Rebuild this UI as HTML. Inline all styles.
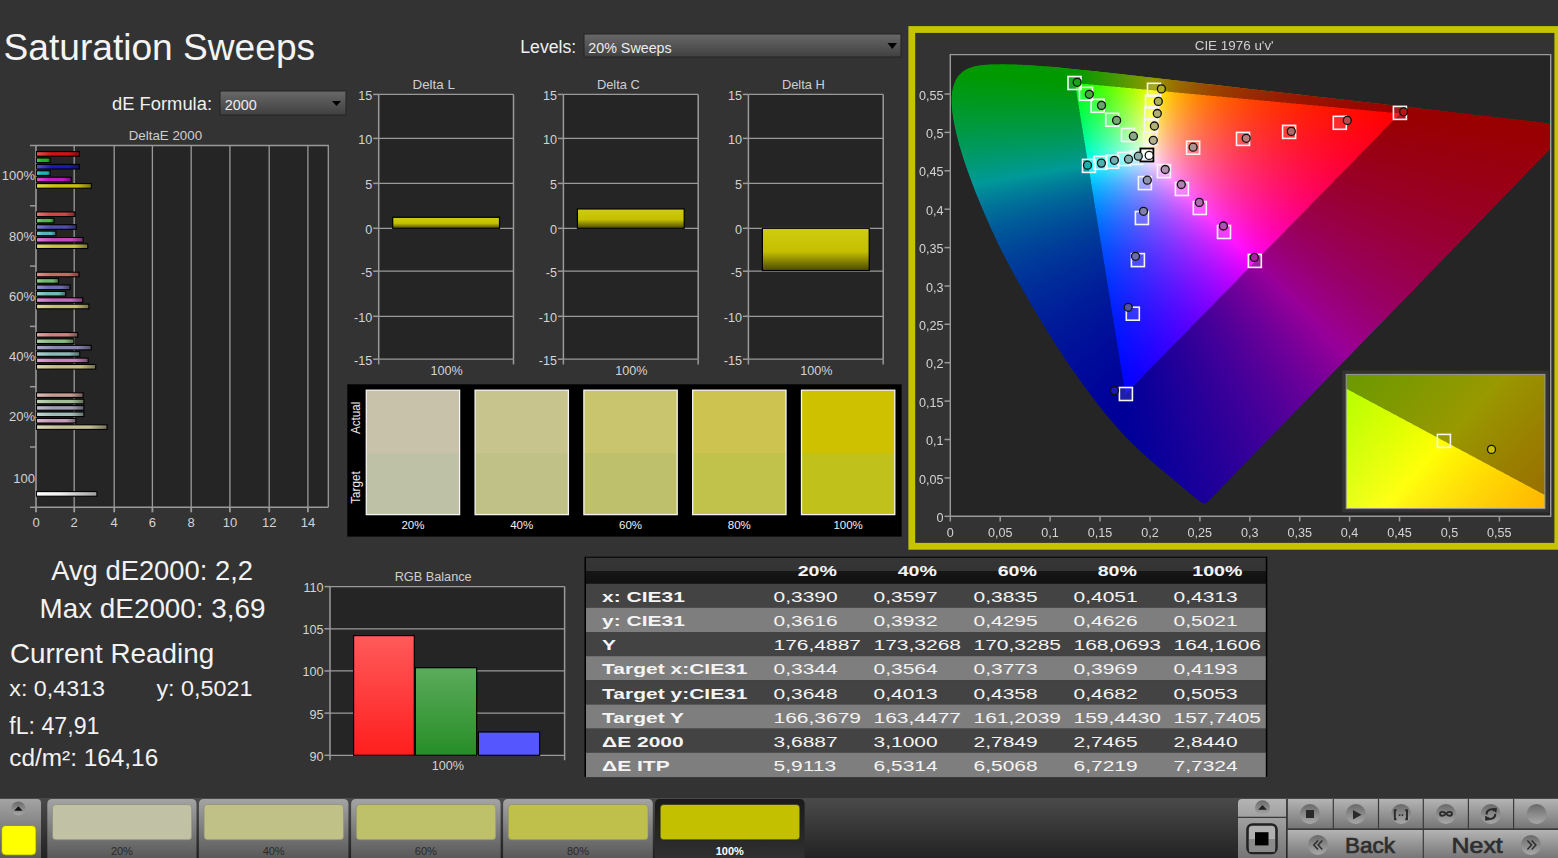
<!DOCTYPE html>
<html><head><meta charset="utf-8"><title>Saturation Sweeps</title>
<style>
html,body{margin:0;padding:0;background:#333333;width:1558px;height:858px;overflow:hidden}
svg{position:absolute;left:0;top:0;font-family:"Liberation Sans", sans-serif}
canvas{position:absolute}
</style></head><body>
<svg id="base" width="1558" height="858" viewBox="0 0 1558 858">
<defs>
<linearGradient id="dd" x1="0" y1="0" x2="0" y2="1"><stop offset="0" stop-color="#686868"/><stop offset="1" stop-color="#404040"/></linearGradient>
<linearGradient id="ybar" x1="0" y1="0" x2="0" y2="1"><stop offset="0" stop-color="#cfcb10"/><stop offset="0.55" stop-color="#c4c000"/><stop offset="1" stop-color="#4a4800"/></linearGradient>
<linearGradient id="rbar" x1="0" y1="0" x2="0" y2="1"><stop offset="0" stop-color="#ff5a5a"/><stop offset="1" stop-color="#ff1e1e"/></linearGradient>
<linearGradient id="gbar" x1="0" y1="0" x2="0" y2="1"><stop offset="0" stop-color="#5cab5c"/><stop offset="1" stop-color="#268e26"/></linearGradient>
<linearGradient id="hdr" x1="0" y1="0" x2="0" y2="1"><stop offset="0" stop-color="#363636"/><stop offset="0.5" stop-color="#333333"/><stop offset="0.5" stop-color="#161616"/><stop offset="1" stop-color="#111111"/></linearGradient>
<linearGradient id="tab" x1="0" y1="0" x2="0" y2="1"><stop offset="0" stop-color="#a4a4a4"/><stop offset="1" stop-color="#595959"/></linearGradient>
<linearGradient id="darkbar" x1="0" y1="0" x2="0" y2="1"><stop offset="0" stop-color="#4a4a4a"/><stop offset="1" stop-color="#232323"/></linearGradient>
<linearGradient id="btn" x1="0" y1="0" x2="0" y2="1"><stop offset="0" stop-color="#b4b4b4"/><stop offset="1" stop-color="#767676"/></linearGradient>
<linearGradient id="circ" x1="0" y1="0" x2="0" y2="1"><stop offset="0" stop-color="#6a6a6a"/><stop offset="1" stop-color="#a8a8a8"/></linearGradient>
<linearGradient id="b00" x1="0" y1="0" x2="1" y2="0"><stop offset="0" stop-color="#e34f4f"/><stop offset="0.35" stop-color="#cd1414"/><stop offset="0.75" stop-color="#cd1414"/><stop offset="1" stop-color="#7b0c0c"/></linearGradient>
<linearGradient id="b01" x1="0" y1="0" x2="1" y2="0"><stop offset="0" stop-color="#57cf57"/><stop offset="0.35" stop-color="#1eb41e"/><stop offset="0.75" stop-color="#1eb41e"/><stop offset="1" stop-color="#126c12"/></linearGradient>
<linearGradient id="b02" x1="0" y1="0" x2="1" y2="0"><stop offset="0" stop-color="#5353cb"/><stop offset="0.35" stop-color="#1919af"/><stop offset="0.75" stop-color="#1919af"/><stop offset="1" stop-color="#0f0f69"/></linearGradient>
<linearGradient id="b03" x1="0" y1="0" x2="1" y2="0"><stop offset="0" stop-color="#57cfd3"/><stop offset="0.35" stop-color="#1eb4b9"/><stop offset="0.75" stop-color="#1eb4b9"/><stop offset="1" stop-color="#126c6f"/></linearGradient>
<linearGradient id="b04" x1="0" y1="0" x2="1" y2="0"><stop offset="0" stop-color="#db53db"/><stop offset="0.35" stop-color="#c319c3"/><stop offset="0.75" stop-color="#c319c3"/><stop offset="1" stop-color="#750f75"/></linearGradient>
<linearGradient id="b05" x1="0" y1="0" x2="1" y2="0"><stop offset="0" stop-color="#dfd94f"/><stop offset="0.35" stop-color="#c8c014"/><stop offset="0.75" stop-color="#c8c014"/><stop offset="1" stop-color="#78730c"/></linearGradient>
<linearGradient id="b10" x1="0" y1="0" x2="1" y2="0"><stop offset="0" stop-color="#e17a78"/><stop offset="0.35" stop-color="#ca4a47"/><stop offset="0.75" stop-color="#ca4a47"/><stop offset="1" stop-color="#792c2a"/></linearGradient>
<linearGradient id="b11" x1="0" y1="0" x2="1" y2="0"><stop offset="0" stop-color="#82d27e"/><stop offset="0.35" stop-color="#53b74e"/><stop offset="0.75" stop-color="#53b74e"/><stop offset="1" stop-color="#316d2e"/></linearGradient>
<linearGradient id="b12" x1="0" y1="0" x2="1" y2="0"><stop offset="0" stop-color="#7e7dcd"/><stop offset="0.35" stop-color="#4f4db1"/><stop offset="0.75" stop-color="#4f4db1"/><stop offset="1" stop-color="#2f2e6a"/></linearGradient>
<linearGradient id="b13" x1="0" y1="0" x2="1" y2="0"><stop offset="0" stop-color="#82d2d2"/><stop offset="0.35" stop-color="#53b7b8"/><stop offset="0.75" stop-color="#53b7b8"/><stop offset="1" stop-color="#316d6e"/></linearGradient>
<linearGradient id="b14" x1="0" y1="0" x2="1" y2="0"><stop offset="0" stop-color="#db7dd7"/><stop offset="0.35" stop-color="#c34dbe"/><stop offset="0.75" stop-color="#c34dbe"/><stop offset="1" stop-color="#752e72"/></linearGradient>
<linearGradient id="b15" x1="0" y1="0" x2="1" y2="0"><stop offset="0" stop-color="#ded878"/><stop offset="0.35" stop-color="#c6bf47"/><stop offset="0.75" stop-color="#c6bf47"/><stop offset="1" stop-color="#76722a"/></linearGradient>
<linearGradient id="b20" x1="0" y1="0" x2="1" y2="0"><stop offset="0" stop-color="#df9390"/><stop offset="0.35" stop-color="#c86965"/><stop offset="0.75" stop-color="#c86965"/><stop offset="1" stop-color="#783f3c"/></linearGradient>
<linearGradient id="b21" x1="0" y1="0" x2="1" y2="0"><stop offset="0" stop-color="#9ad394"/><stop offset="0.35" stop-color="#71b96a"/><stop offset="0.75" stop-color="#71b96a"/><stop offset="1" stop-color="#436f3f"/></linearGradient>
<linearGradient id="b22" x1="0" y1="0" x2="1" y2="0"><stop offset="0" stop-color="#9795ce"/><stop offset="0.35" stop-color="#6e6bb2"/><stop offset="0.75" stop-color="#6e6bb2"/><stop offset="1" stop-color="#42406a"/></linearGradient>
<linearGradient id="b23" x1="0" y1="0" x2="1" y2="0"><stop offset="0" stop-color="#9ad3d2"/><stop offset="0.35" stop-color="#71b9b7"/><stop offset="0.75" stop-color="#71b9b7"/><stop offset="1" stop-color="#436f6d"/></linearGradient>
<linearGradient id="b24" x1="0" y1="0" x2="1" y2="0"><stop offset="0" stop-color="#db95d6"/><stop offset="0.35" stop-color="#c36bbc"/><stop offset="0.75" stop-color="#c36bbc"/><stop offset="1" stop-color="#754070"/></linearGradient>
<linearGradient id="b25" x1="0" y1="0" x2="1" y2="0"><stop offset="0" stop-color="#ded890"/><stop offset="0.35" stop-color="#c6bf65"/><stop offset="0.75" stop-color="#c6bf65"/><stop offset="1" stop-color="#76723c"/></linearGradient>
<linearGradient id="b30" x1="0" y1="0" x2="1" y2="0"><stop offset="0" stop-color="#dea9a4"/><stop offset="0.35" stop-color="#c7847e"/><stop offset="0.75" stop-color="#c7847e"/><stop offset="1" stop-color="#774f4b"/></linearGradient>
<linearGradient id="b31" x1="0" y1="0" x2="1" y2="0"><stop offset="0" stop-color="#aed4a7"/><stop offset="0.35" stop-color="#8bba82"/><stop offset="0.75" stop-color="#8bba82"/><stop offset="1" stop-color="#536f4e"/></linearGradient>
<linearGradient id="b32" x1="0" y1="0" x2="1" y2="0"><stop offset="0" stop-color="#adaace"/><stop offset="0.35" stop-color="#8985b3"/><stop offset="0.75" stop-color="#8985b3"/><stop offset="1" stop-color="#524f6b"/></linearGradient>
<linearGradient id="b33" x1="0" y1="0" x2="1" y2="0"><stop offset="0" stop-color="#aed4d2"/><stop offset="0.35" stop-color="#8bbab7"/><stop offset="0.75" stop-color="#8bbab7"/><stop offset="1" stop-color="#536f6d"/></linearGradient>
<linearGradient id="b34" x1="0" y1="0" x2="1" y2="0"><stop offset="0" stop-color="#dbaad4"/><stop offset="0.35" stop-color="#c385ba"/><stop offset="0.75" stop-color="#c385ba"/><stop offset="1" stop-color="#754f6f"/></linearGradient>
<linearGradient id="b35" x1="0" y1="0" x2="1" y2="0"><stop offset="0" stop-color="#ddd7a4"/><stop offset="0.35" stop-color="#c5be7e"/><stop offset="0.75" stop-color="#c5be7e"/><stop offset="1" stop-color="#76724b"/></linearGradient>
<linearGradient id="b40" x1="0" y1="0" x2="1" y2="0"><stop offset="0" stop-color="#ddbcb6"/><stop offset="0.35" stop-color="#c59c95"/><stop offset="0.75" stop-color="#c59c95"/><stop offset="1" stop-color="#765d59"/></linearGradient>
<linearGradient id="b41" x1="0" y1="0" x2="1" y2="0"><stop offset="0" stop-color="#c1d6b8"/><stop offset="0.35" stop-color="#a2bc97"/><stop offset="0.75" stop-color="#a2bc97"/><stop offset="1" stop-color="#61705a"/></linearGradient>
<linearGradient id="b42" x1="0" y1="0" x2="1" y2="0"><stop offset="0" stop-color="#c0bdcf"/><stop offset="0.35" stop-color="#a19db4"/><stop offset="0.75" stop-color="#a19db4"/><stop offset="1" stop-color="#605e6c"/></linearGradient>
<linearGradient id="b43" x1="0" y1="0" x2="1" y2="0"><stop offset="0" stop-color="#c1d6d1"/><stop offset="0.35" stop-color="#a2bcb6"/><stop offset="0.75" stop-color="#a2bcb6"/><stop offset="1" stop-color="#61706d"/></linearGradient>
<linearGradient id="b44" x1="0" y1="0" x2="1" y2="0"><stop offset="0" stop-color="#dbbdd2"/><stop offset="0.35" stop-color="#c39db8"/><stop offset="0.75" stop-color="#c39db8"/><stop offset="1" stop-color="#755e6e"/></linearGradient>
<linearGradient id="b45" x1="0" y1="0" x2="1" y2="0"><stop offset="0" stop-color="#dcd7b6"/><stop offset="0.35" stop-color="#c4be95"/><stop offset="0.75" stop-color="#c4be95"/><stop offset="1" stop-color="#757259"/></linearGradient>
</defs>
<text x="3.6" y="60" font-size="37" fill="#f4f4f4" text-anchor="start" font-weight="normal" textLength="311.5" lengthAdjust="spacingAndGlyphs">Saturation Sweeps</text>
<text x="112" y="110" font-size="18.3" fill="#f0f0f0" text-anchor="start" font-weight="normal" textLength="100" lengthAdjust="spacingAndGlyphs">dE Formula:</text>
<rect x="220" y="91" width="126" height="24" fill="url(#dd)" stroke="#242424" stroke-width="1"/>
<text x="224.8" y="109.7" font-size="15" fill="#ececec" text-anchor="start" font-weight="normal" textLength="32" lengthAdjust="spacingAndGlyphs">2000</text>
<path d="M332 101 L341 101 L336.5 106 Z" fill="#000"/>
<text x="520.3" y="53.2" font-size="18.3" fill="#f0f0f0" text-anchor="start" font-weight="normal" textLength="56" lengthAdjust="spacingAndGlyphs">Levels:</text>
<rect x="584" y="34" width="317" height="23" fill="url(#dd)" stroke="#242424" stroke-width="1"/>
<text x="588.3" y="52.7" font-size="15" fill="#ececec" text-anchor="start" font-weight="normal" textLength="83.4" lengthAdjust="spacingAndGlyphs">20% Sweeps</text>
<path d="M887.5 43 L897 43 L892.25 49 Z" fill="#000"/>
<text x="165.4" y="139.7" font-size="12.6" fill="#cfcfcf" text-anchor="middle" font-weight="normal" textLength="73.4" lengthAdjust="spacingAndGlyphs">DeltaE 2000</text>
<rect x="36" y="145.5" width="292.3" height="361.8" fill="#252525"/>
<line x1="74.2" y1="145.5" x2="74.2" y2="507.3" stroke="#9a9a9a" stroke-width="1.3"/>
<line x1="114.2" y1="145.5" x2="114.2" y2="507.3" stroke="#9a9a9a" stroke-width="1.3"/>
<line x1="152.4" y1="145.5" x2="152.4" y2="507.3" stroke="#9a9a9a" stroke-width="1.3"/>
<line x1="191.2" y1="145.5" x2="191.2" y2="507.3" stroke="#9a9a9a" stroke-width="1.3"/>
<line x1="229.9" y1="145.5" x2="229.9" y2="507.3" stroke="#9a9a9a" stroke-width="1.3"/>
<line x1="269.2" y1="145.5" x2="269.2" y2="507.3" stroke="#9a9a9a" stroke-width="1.3"/>
<line x1="307.9" y1="145.5" x2="307.9" y2="507.3" stroke="#9a9a9a" stroke-width="1.3"/>
<path d="M36 145.5 H328.3 V507.3" fill="none" stroke="#9a9a9a" stroke-width="1.3"/>
<path d="M36 144.9 V507.3 H328.3" fill="none" stroke="#9a9a9a" stroke-width="1.6"/>
<line x1="30" y1="145.5" x2="36" y2="145.5" stroke="#9a9a9a" stroke-width="1.5"/>
<line x1="30" y1="205.8" x2="36" y2="205.8" stroke="#9a9a9a" stroke-width="1.5"/>
<line x1="30" y1="266.1" x2="36" y2="266.1" stroke="#9a9a9a" stroke-width="1.5"/>
<line x1="30" y1="326.4" x2="36" y2="326.4" stroke="#9a9a9a" stroke-width="1.5"/>
<line x1="30" y1="386.70000000000005" x2="36" y2="386.70000000000005" stroke="#9a9a9a" stroke-width="1.5"/>
<line x1="30" y1="447.0" x2="36" y2="447.0" stroke="#9a9a9a" stroke-width="1.5"/>
<line x1="30" y1="507.3" x2="36" y2="507.3" stroke="#9a9a9a" stroke-width="1.5"/>
<line x1="36" y1="507.3" x2="36" y2="512.3" stroke="#9a9a9a" stroke-width="1.8"/>
<text x="36" y="527.4" font-size="13" fill="#d4d4d4" text-anchor="middle" font-weight="normal">0</text>
<line x1="74.2" y1="507.3" x2="74.2" y2="512.3" stroke="#9a9a9a" stroke-width="1.8"/>
<text x="74.2" y="527.4" font-size="13" fill="#d4d4d4" text-anchor="middle" font-weight="normal">2</text>
<line x1="114.2" y1="507.3" x2="114.2" y2="512.3" stroke="#9a9a9a" stroke-width="1.8"/>
<text x="114.2" y="527.4" font-size="13" fill="#d4d4d4" text-anchor="middle" font-weight="normal">4</text>
<line x1="152.4" y1="507.3" x2="152.4" y2="512.3" stroke="#9a9a9a" stroke-width="1.8"/>
<text x="152.4" y="527.4" font-size="13" fill="#d4d4d4" text-anchor="middle" font-weight="normal">6</text>
<line x1="191.2" y1="507.3" x2="191.2" y2="512.3" stroke="#9a9a9a" stroke-width="1.8"/>
<text x="191.2" y="527.4" font-size="13" fill="#d4d4d4" text-anchor="middle" font-weight="normal">8</text>
<line x1="229.9" y1="507.3" x2="229.9" y2="512.3" stroke="#9a9a9a" stroke-width="1.8"/>
<text x="229.9" y="527.4" font-size="13" fill="#d4d4d4" text-anchor="middle" font-weight="normal">10</text>
<line x1="269.2" y1="507.3" x2="269.2" y2="512.3" stroke="#9a9a9a" stroke-width="1.8"/>
<text x="269.2" y="527.4" font-size="13" fill="#d4d4d4" text-anchor="middle" font-weight="normal">12</text>
<line x1="307.9" y1="507.3" x2="307.9" y2="512.3" stroke="#9a9a9a" stroke-width="1.8"/>
<text x="307.9" y="527.4" font-size="13" fill="#d4d4d4" text-anchor="middle" font-weight="normal">14</text>
<text x="35" y="180.25" font-size="13" fill="#d4d4d4" text-anchor="end" font-weight="normal">100%</text>
<text x="35" y="240.54999999999998" font-size="13" fill="#d4d4d4" text-anchor="end" font-weight="normal">80%</text>
<text x="35" y="300.85" font-size="13" fill="#d4d4d4" text-anchor="end" font-weight="normal">60%</text>
<text x="35" y="361.15" font-size="13" fill="#d4d4d4" text-anchor="end" font-weight="normal">40%</text>
<text x="35" y="421.45000000000005" font-size="13" fill="#d4d4d4" text-anchor="end" font-weight="normal">20%</text>
<text x="35" y="482.6" font-size="13" fill="#d4d4d4" text-anchor="end" font-weight="normal">100</text>
<rect x="36.5" y="151.6" width="43" height="4.6" fill="url(#b00)" stroke="#000" stroke-width="1.1"/>
<rect x="36.5" y="158.0" width="13.700000000000003" height="4.6" fill="url(#b01)" stroke="#000" stroke-width="1.1"/>
<rect x="36.5" y="164.4" width="43" height="4.6" fill="url(#b02)" stroke="#000" stroke-width="1.1"/>
<rect x="36.5" y="170.8" width="13.700000000000003" height="4.6" fill="url(#b03)" stroke="#000" stroke-width="1.1"/>
<rect x="36.5" y="177.2" width="34.8" height="4.6" fill="url(#b04)" stroke="#000" stroke-width="1.1"/>
<rect x="36.5" y="183.6" width="54.900000000000006" height="4.6" fill="url(#b05)" stroke="#000" stroke-width="1.1"/>
<rect x="36.5" y="211.9" width="38.5" height="4.6" fill="url(#b10)" stroke="#000" stroke-width="1.1"/>
<rect x="36.5" y="218.3" width="17.5" height="4.6" fill="url(#b11)" stroke="#000" stroke-width="1.1"/>
<rect x="36.5" y="224.70000000000002" width="39.8" height="4.6" fill="url(#b12)" stroke="#000" stroke-width="1.1"/>
<rect x="36.5" y="231.10000000000002" width="19.4" height="4.6" fill="url(#b13)" stroke="#000" stroke-width="1.1"/>
<rect x="36.5" y="237.5" width="46.599999999999994" height="4.6" fill="url(#b14)" stroke="#000" stroke-width="1.1"/>
<rect x="36.5" y="243.9" width="51.3" height="4.6" fill="url(#b15)" stroke="#000" stroke-width="1.1"/>
<rect x="36.5" y="272.20000000000005" width="42.5" height="4.6" fill="url(#b20)" stroke="#000" stroke-width="1.1"/>
<rect x="36.5" y="278.6" width="22" height="4.6" fill="url(#b21)" stroke="#000" stroke-width="1.1"/>
<rect x="36.5" y="285.00000000000006" width="33.5" height="4.6" fill="url(#b22)" stroke="#000" stroke-width="1.1"/>
<rect x="36.5" y="291.40000000000003" width="29.200000000000003" height="4.6" fill="url(#b23)" stroke="#000" stroke-width="1.1"/>
<rect x="36.5" y="297.80000000000007" width="46.3" height="4.6" fill="url(#b24)" stroke="#000" stroke-width="1.1"/>
<rect x="36.5" y="304.20000000000005" width="52.400000000000006" height="4.6" fill="url(#b25)" stroke="#000" stroke-width="1.1"/>
<rect x="36.5" y="332.5" width="41.3" height="4.6" fill="url(#b30)" stroke="#000" stroke-width="1.1"/>
<rect x="36.5" y="338.9" width="37.5" height="4.6" fill="url(#b31)" stroke="#000" stroke-width="1.1"/>
<rect x="36.5" y="345.3" width="54.7" height="4.6" fill="url(#b32)" stroke="#000" stroke-width="1.1"/>
<rect x="36.5" y="351.7" width="43.3" height="4.6" fill="url(#b33)" stroke="#000" stroke-width="1.1"/>
<rect x="36.5" y="358.1" width="51.599999999999994" height="4.6" fill="url(#b34)" stroke="#000" stroke-width="1.1"/>
<rect x="36.5" y="364.5" width="59.2" height="4.6" fill="url(#b35)" stroke="#000" stroke-width="1.1"/>
<rect x="36.5" y="392.80000000000007" width="46.599999999999994" height="4.6" fill="url(#b40)" stroke="#000" stroke-width="1.1"/>
<rect x="36.5" y="399.20000000000005" width="47.400000000000006" height="4.6" fill="url(#b41)" stroke="#000" stroke-width="1.1"/>
<rect x="36.5" y="405.6000000000001" width="47.400000000000006" height="4.6" fill="url(#b42)" stroke="#000" stroke-width="1.1"/>
<rect x="36.5" y="412.00000000000006" width="47.400000000000006" height="4.6" fill="url(#b43)" stroke="#000" stroke-width="1.1"/>
<rect x="36.5" y="418.4000000000001" width="39.400000000000006" height="4.6" fill="url(#b44)" stroke="#000" stroke-width="1.1"/>
<rect x="36.5" y="424.80000000000007" width="70.5" height="4.6" fill="url(#b45)" stroke="#000" stroke-width="1.1"/>
<linearGradient id="bw" x1="0" y1="0" x2="1" y2="0"><stop offset="0" stop-color="#ffffff"/><stop offset="0.4" stop-color="#f0f0f0"/><stop offset="1" stop-color="#a0a0a0"/></linearGradient>
<rect x="36.5" y="491.6" width="60.400000000000006" height="4.6" fill="url(#bw)" stroke="#000" stroke-width="1.1"/>
<text x="433.7" y="89.2" font-size="12.4" fill="#cfcfcf" text-anchor="middle" font-weight="normal" textLength="42.3" lengthAdjust="spacingAndGlyphs">Delta L</text>
<rect x="378.7" y="94.4" width="134.8" height="265.0" fill="#252525"/>
<line x1="378.7" y1="94.4" x2="513.5" y2="94.4" stroke="#9a9a9a" stroke-width="1.3"/>
<line x1="373.2" y1="94.4" x2="378.7" y2="94.4" stroke="#9a9a9a" stroke-width="1.5"/>
<text x="372.2" y="99.9" font-size="12.6" fill="#d4d4d4" text-anchor="end" font-weight="normal">15</text>
<line x1="378.7" y1="138.4" x2="513.5" y2="138.4" stroke="#9a9a9a" stroke-width="1.3"/>
<line x1="373.2" y1="138.4" x2="378.7" y2="138.4" stroke="#9a9a9a" stroke-width="1.5"/>
<text x="372.2" y="143.9" font-size="12.6" fill="#d4d4d4" text-anchor="end" font-weight="normal">10</text>
<line x1="378.7" y1="183.4" x2="513.5" y2="183.4" stroke="#9a9a9a" stroke-width="1.3"/>
<line x1="373.2" y1="183.4" x2="378.7" y2="183.4" stroke="#9a9a9a" stroke-width="1.5"/>
<text x="372.2" y="188.9" font-size="12.6" fill="#d4d4d4" text-anchor="end" font-weight="normal">5</text>
<line x1="378.7" y1="228.3" x2="513.5" y2="228.3" stroke="#9a9a9a" stroke-width="1.3"/>
<line x1="373.2" y1="228.3" x2="378.7" y2="228.3" stroke="#9a9a9a" stroke-width="1.5"/>
<text x="372.2" y="233.8" font-size="12.6" fill="#d4d4d4" text-anchor="end" font-weight="normal">0</text>
<line x1="378.7" y1="271.2" x2="513.5" y2="271.2" stroke="#9a9a9a" stroke-width="1.3"/>
<line x1="373.2" y1="271.2" x2="378.7" y2="271.2" stroke="#9a9a9a" stroke-width="1.5"/>
<text x="372.2" y="276.7" font-size="12.6" fill="#d4d4d4" text-anchor="end" font-weight="normal">-5</text>
<line x1="378.7" y1="316.3" x2="513.5" y2="316.3" stroke="#9a9a9a" stroke-width="1.3"/>
<line x1="373.2" y1="316.3" x2="378.7" y2="316.3" stroke="#9a9a9a" stroke-width="1.5"/>
<text x="372.2" y="321.8" font-size="12.6" fill="#d4d4d4" text-anchor="end" font-weight="normal">-10</text>
<line x1="378.7" y1="359.2" x2="513.5" y2="359.2" stroke="#9a9a9a" stroke-width="1.3"/>
<line x1="373.2" y1="359.2" x2="378.7" y2="359.2" stroke="#9a9a9a" stroke-width="1.5"/>
<text x="372.2" y="364.7" font-size="12.6" fill="#d4d4d4" text-anchor="end" font-weight="normal">-15</text>
<path d="M378.7 94.4 V359.4 M513.5 94.4 V359.4" stroke="#9a9a9a" stroke-width="1.5"/>
<path d="M378.7 359.4 V364.4 M513.5 359.4 V364.4" stroke="#9a9a9a" stroke-width="1.5"/>
<text x="446.6" y="374.8" font-size="12.6" fill="#d4d4d4" text-anchor="middle" font-weight="normal">100%</text>
<rect x="392.7" y="217.3" width="106.80000000000001" height="11.0" fill="url(#ybar)" stroke="#000" stroke-width="1.2"/>
<text x="618.4" y="89.2" font-size="12.4" fill="#cfcfcf" text-anchor="middle" font-weight="normal" textLength="43" lengthAdjust="spacingAndGlyphs">Delta C</text>
<rect x="563.4" y="94.4" width="134.80000000000007" height="265.0" fill="#252525"/>
<line x1="563.4" y1="94.4" x2="698.2" y2="94.4" stroke="#9a9a9a" stroke-width="1.3"/>
<line x1="557.9" y1="94.4" x2="563.4" y2="94.4" stroke="#9a9a9a" stroke-width="1.5"/>
<text x="556.9" y="99.9" font-size="12.6" fill="#d4d4d4" text-anchor="end" font-weight="normal">15</text>
<line x1="563.4" y1="138.4" x2="698.2" y2="138.4" stroke="#9a9a9a" stroke-width="1.3"/>
<line x1="557.9" y1="138.4" x2="563.4" y2="138.4" stroke="#9a9a9a" stroke-width="1.5"/>
<text x="556.9" y="143.9" font-size="12.6" fill="#d4d4d4" text-anchor="end" font-weight="normal">10</text>
<line x1="563.4" y1="183.4" x2="698.2" y2="183.4" stroke="#9a9a9a" stroke-width="1.3"/>
<line x1="557.9" y1="183.4" x2="563.4" y2="183.4" stroke="#9a9a9a" stroke-width="1.5"/>
<text x="556.9" y="188.9" font-size="12.6" fill="#d4d4d4" text-anchor="end" font-weight="normal">5</text>
<line x1="563.4" y1="228.3" x2="698.2" y2="228.3" stroke="#9a9a9a" stroke-width="1.3"/>
<line x1="557.9" y1="228.3" x2="563.4" y2="228.3" stroke="#9a9a9a" stroke-width="1.5"/>
<text x="556.9" y="233.8" font-size="12.6" fill="#d4d4d4" text-anchor="end" font-weight="normal">0</text>
<line x1="563.4" y1="271.2" x2="698.2" y2="271.2" stroke="#9a9a9a" stroke-width="1.3"/>
<line x1="557.9" y1="271.2" x2="563.4" y2="271.2" stroke="#9a9a9a" stroke-width="1.5"/>
<text x="556.9" y="276.7" font-size="12.6" fill="#d4d4d4" text-anchor="end" font-weight="normal">-5</text>
<line x1="563.4" y1="316.3" x2="698.2" y2="316.3" stroke="#9a9a9a" stroke-width="1.3"/>
<line x1="557.9" y1="316.3" x2="563.4" y2="316.3" stroke="#9a9a9a" stroke-width="1.5"/>
<text x="556.9" y="321.8" font-size="12.6" fill="#d4d4d4" text-anchor="end" font-weight="normal">-10</text>
<line x1="563.4" y1="359.2" x2="698.2" y2="359.2" stroke="#9a9a9a" stroke-width="1.3"/>
<line x1="557.9" y1="359.2" x2="563.4" y2="359.2" stroke="#9a9a9a" stroke-width="1.5"/>
<text x="556.9" y="364.7" font-size="12.6" fill="#d4d4d4" text-anchor="end" font-weight="normal">-15</text>
<path d="M563.4 94.4 V359.4 M698.2 94.4 V359.4" stroke="#9a9a9a" stroke-width="1.5"/>
<path d="M563.4 359.4 V364.4 M698.2 359.4 V364.4" stroke="#9a9a9a" stroke-width="1.5"/>
<text x="631.3" y="374.8" font-size="12.6" fill="#d4d4d4" text-anchor="middle" font-weight="normal">100%</text>
<rect x="577.4" y="208.94" width="106.80000000000007" height="19.360000000000014" fill="url(#ybar)" stroke="#000" stroke-width="1.2"/>
<text x="803.4" y="89.2" font-size="12.4" fill="#cfcfcf" text-anchor="middle" font-weight="normal" textLength="43" lengthAdjust="spacingAndGlyphs">Delta H</text>
<rect x="748.4" y="94.4" width="134.80000000000007" height="265.0" fill="#252525"/>
<line x1="748.4" y1="94.4" x2="883.2" y2="94.4" stroke="#9a9a9a" stroke-width="1.3"/>
<line x1="742.9" y1="94.4" x2="748.4" y2="94.4" stroke="#9a9a9a" stroke-width="1.5"/>
<text x="741.9" y="99.9" font-size="12.6" fill="#d4d4d4" text-anchor="end" font-weight="normal">15</text>
<line x1="748.4" y1="138.4" x2="883.2" y2="138.4" stroke="#9a9a9a" stroke-width="1.3"/>
<line x1="742.9" y1="138.4" x2="748.4" y2="138.4" stroke="#9a9a9a" stroke-width="1.5"/>
<text x="741.9" y="143.9" font-size="12.6" fill="#d4d4d4" text-anchor="end" font-weight="normal">10</text>
<line x1="748.4" y1="183.4" x2="883.2" y2="183.4" stroke="#9a9a9a" stroke-width="1.3"/>
<line x1="742.9" y1="183.4" x2="748.4" y2="183.4" stroke="#9a9a9a" stroke-width="1.5"/>
<text x="741.9" y="188.9" font-size="12.6" fill="#d4d4d4" text-anchor="end" font-weight="normal">5</text>
<line x1="748.4" y1="228.3" x2="883.2" y2="228.3" stroke="#9a9a9a" stroke-width="1.3"/>
<line x1="742.9" y1="228.3" x2="748.4" y2="228.3" stroke="#9a9a9a" stroke-width="1.5"/>
<text x="741.9" y="233.8" font-size="12.6" fill="#d4d4d4" text-anchor="end" font-weight="normal">0</text>
<line x1="748.4" y1="271.2" x2="883.2" y2="271.2" stroke="#9a9a9a" stroke-width="1.3"/>
<line x1="742.9" y1="271.2" x2="748.4" y2="271.2" stroke="#9a9a9a" stroke-width="1.5"/>
<text x="741.9" y="276.7" font-size="12.6" fill="#d4d4d4" text-anchor="end" font-weight="normal">-5</text>
<line x1="748.4" y1="316.3" x2="883.2" y2="316.3" stroke="#9a9a9a" stroke-width="1.3"/>
<line x1="742.9" y1="316.3" x2="748.4" y2="316.3" stroke="#9a9a9a" stroke-width="1.5"/>
<text x="741.9" y="321.8" font-size="12.6" fill="#d4d4d4" text-anchor="end" font-weight="normal">-10</text>
<line x1="748.4" y1="359.2" x2="883.2" y2="359.2" stroke="#9a9a9a" stroke-width="1.3"/>
<line x1="742.9" y1="359.2" x2="748.4" y2="359.2" stroke="#9a9a9a" stroke-width="1.5"/>
<text x="741.9" y="364.7" font-size="12.6" fill="#d4d4d4" text-anchor="end" font-weight="normal">-15</text>
<path d="M748.4 94.4 V359.4 M883.2 94.4 V359.4" stroke="#9a9a9a" stroke-width="1.5"/>
<path d="M748.4 359.4 V364.4 M883.2 359.4 V364.4" stroke="#9a9a9a" stroke-width="1.5"/>
<text x="816.3" y="374.8" font-size="12.6" fill="#d4d4d4" text-anchor="middle" font-weight="normal">100%</text>
<rect x="762.4" y="228.3" width="106.80000000000007" height="42.24000000000001" fill="url(#ybar)" stroke="#000" stroke-width="1.2"/>
<rect x="347.3" y="384.3" width="554.3" height="152.3" fill="#000"/>
<rect x="366.3" y="390.2" width="93.3" height="64" fill="#c9c2ab"/>
<rect x="366.3" y="453.2" width="93.3" height="61.4" fill="#bfc1a6"/>
<rect x="366.3" y="390.2" width="93.3" height="124.4" fill="none" stroke="#f4f4f4" stroke-width="1.3"/>
<text x="412.90000000000003" y="529.3" font-size="11.5" fill="#f0f0f0" text-anchor="middle" font-weight="normal">20%</text>
<rect x="475.1" y="390.2" width="93.3" height="64" fill="#c8c48e"/>
<rect x="475.1" y="453.2" width="93.3" height="61.4" fill="#c0c187"/>
<rect x="475.1" y="390.2" width="93.3" height="124.4" fill="none" stroke="#f4f4f4" stroke-width="1.3"/>
<text x="521.7" y="529.3" font-size="11.5" fill="#f0f0f0" text-anchor="middle" font-weight="normal">40%</text>
<rect x="583.9" y="390.2" width="93.3" height="64" fill="#c9c46e"/>
<rect x="583.9" y="453.2" width="93.3" height="61.4" fill="#bfc06b"/>
<rect x="583.9" y="390.2" width="93.3" height="124.4" fill="none" stroke="#f4f4f4" stroke-width="1.3"/>
<text x="630.5" y="529.3" font-size="11.5" fill="#f0f0f0" text-anchor="middle" font-weight="normal">60%</text>
<rect x="692.7" y="390.2" width="93.3" height="64" fill="#cdc351"/>
<rect x="692.7" y="453.2" width="93.3" height="61.4" fill="#c0c24b"/>
<rect x="692.7" y="390.2" width="93.3" height="124.4" fill="none" stroke="#f4f4f4" stroke-width="1.3"/>
<text x="739.3000000000001" y="529.3" font-size="11.5" fill="#f0f0f0" text-anchor="middle" font-weight="normal">80%</text>
<rect x="801.5" y="390.2" width="93.3" height="64" fill="#cec200"/>
<rect x="801.5" y="453.2" width="93.3" height="61.4" fill="#c1c11c"/>
<rect x="801.5" y="390.2" width="93.3" height="124.4" fill="none" stroke="#f4f4f4" stroke-width="1.3"/>
<text x="848.1" y="529.3" font-size="11.5" fill="#f0f0f0" text-anchor="middle" font-weight="normal">100%</text>
<text transform="translate(359.5,417.8) rotate(-90)" font-size="12.2" fill="#f0f0f0" text-anchor="middle" textLength="32.5" lengthAdjust="spacingAndGlyphs">Actual</text>
<text transform="translate(359.5,487.5) rotate(-90)" font-size="12.2" fill="#f0f0f0" text-anchor="middle" textLength="32.5" lengthAdjust="spacingAndGlyphs">Target</text>
<text x="51.2" y="579.7" font-size="27.3" fill="#f2f2f2" text-anchor="start" font-weight="normal" textLength="201.8" lengthAdjust="spacingAndGlyphs">Avg dE2000: 2,2</text>
<text x="39.5" y="617.9" font-size="27.3" fill="#f2f2f2" text-anchor="start" font-weight="normal" textLength="226" lengthAdjust="spacingAndGlyphs">Max dE2000: 3,69</text>
<text x="9.9" y="662.9" font-size="27.5" fill="#f2f2f2" text-anchor="start" font-weight="normal" textLength="204.3" lengthAdjust="spacingAndGlyphs">Current Reading</text>
<text x="9.3" y="695.5" font-size="22.8" fill="#f2f2f2" text-anchor="start" font-weight="normal" textLength="95.7" lengthAdjust="spacingAndGlyphs">x: 0,4313</text>
<text x="156.4" y="695.5" font-size="22.8" fill="#f2f2f2" text-anchor="start" font-weight="normal" textLength="96" lengthAdjust="spacingAndGlyphs">y: 0,5021</text>
<text x="9.3" y="733.8" font-size="23" fill="#f2f2f2" text-anchor="start" font-weight="normal" textLength="90.1" lengthAdjust="spacingAndGlyphs">fL: 47,91</text>
<text x="9.3" y="765.8" font-size="23" fill="#f2f2f2" text-anchor="start" font-weight="normal" textLength="148.9" lengthAdjust="spacingAndGlyphs">cd/m²: 164,16</text>
<text x="433.2" y="581" font-size="12.4" fill="#cfcfcf" text-anchor="middle" font-weight="normal" textLength="77" lengthAdjust="spacingAndGlyphs">RGB Balance</text>
<rect x="330" y="586.6" width="234.60000000000002" height="168.69999999999993" fill="#252525"/>
<line x1="330" y1="586.6" x2="564.6" y2="586.6" stroke="#9a9a9a" stroke-width="1.3"/>
<line x1="324.5" y1="586.6" x2="330" y2="586.6" stroke="#9a9a9a" stroke-width="1.5"/>
<text x="323.5" y="592.1" font-size="12.6" fill="#d4d4d4" text-anchor="end" font-weight="normal">110</text>
<line x1="330" y1="628.775" x2="564.6" y2="628.775" stroke="#9a9a9a" stroke-width="1.3"/>
<line x1="324.5" y1="628.775" x2="330" y2="628.775" stroke="#9a9a9a" stroke-width="1.5"/>
<text x="323.5" y="634.275" font-size="12.6" fill="#d4d4d4" text-anchor="end" font-weight="normal">105</text>
<line x1="330" y1="670.95" x2="564.6" y2="670.95" stroke="#9a9a9a" stroke-width="1.3"/>
<line x1="324.5" y1="670.95" x2="330" y2="670.95" stroke="#9a9a9a" stroke-width="1.5"/>
<text x="323.5" y="676.45" font-size="12.6" fill="#d4d4d4" text-anchor="end" font-weight="normal">100</text>
<line x1="330" y1="713.125" x2="564.6" y2="713.125" stroke="#9a9a9a" stroke-width="1.3"/>
<line x1="324.5" y1="713.125" x2="330" y2="713.125" stroke="#9a9a9a" stroke-width="1.5"/>
<text x="323.5" y="718.625" font-size="12.6" fill="#d4d4d4" text-anchor="end" font-weight="normal">95</text>
<line x1="330" y1="755.3" x2="564.6" y2="755.3" stroke="#9a9a9a" stroke-width="1.3"/>
<line x1="324.5" y1="755.3" x2="330" y2="755.3" stroke="#9a9a9a" stroke-width="1.5"/>
<text x="323.5" y="760.8" font-size="12.6" fill="#d4d4d4" text-anchor="end" font-weight="normal">90</text>
<path d="M330 586.6 V760.3 M564.6 586.6 V760.3" stroke="#9a9a9a" stroke-width="1.5"/>
<rect x="353.6" y="635.6" width="60.7" height="119.69999999999993" fill="url(#rbar)" stroke="#000" stroke-width="1.2"/>
<rect x="415.3" y="667.7" width="61.4" height="87.59999999999991" fill="url(#gbar)" stroke="#000" stroke-width="1.2"/>
<rect x="478.4" y="732" width="61.2" height="23.299999999999955" fill="#5656ff" stroke="#000" stroke-width="1.2"/>
<text x="447.9" y="770.3" font-size="12.6" fill="#d4d4d4" text-anchor="middle" font-weight="normal">100%</text>
<rect x="584.5" y="556.7" width="682.8" height="220.19999999999993" fill="#000"/>
<rect x="586.0" y="557.7" width="679.8" height="26.0" fill="url(#hdr)"/>
<rect x="586.0" y="583.7" width="679.8" height="24.34999999999999" fill="#434343"/>
<text x="430.0714285714286" y="602.0" font-size="15" font-weight="bold" fill="#f4f4f4" transform="scale(1.4,1)">x: CIE31</text>
<text x="552.5" y="602.0" font-size="15" fill="#f4f4f4" transform="scale(1.4,1)">0,3390</text>
<text x="623.9285714285714" y="602.0" font-size="15" fill="#f4f4f4" transform="scale(1.4,1)">0,3597</text>
<text x="695.3571428571429" y="602.0" font-size="15" fill="#f4f4f4" transform="scale(1.4,1)">0,3835</text>
<text x="766.7857142857143" y="602.0" font-size="15" fill="#f4f4f4" transform="scale(1.4,1)">0,4051</text>
<text x="838.2142857142858" y="602.0" font-size="15" fill="#f4f4f4" transform="scale(1.4,1)">0,4313</text>
<rect x="586.0" y="607.85" width="679.8" height="24.34999999999999" fill="#7e7e7e"/>
<text x="430.0714285714286" y="626.15" font-size="15" font-weight="bold" fill="#f4f4f4" transform="scale(1.4,1)">y: CIE31</text>
<text x="552.5" y="626.15" font-size="15" fill="#f4f4f4" transform="scale(1.4,1)">0,3616</text>
<text x="623.9285714285714" y="626.15" font-size="15" fill="#f4f4f4" transform="scale(1.4,1)">0,3932</text>
<text x="695.3571428571429" y="626.15" font-size="15" fill="#f4f4f4" transform="scale(1.4,1)">0,4295</text>
<text x="766.7857142857143" y="626.15" font-size="15" fill="#f4f4f4" transform="scale(1.4,1)">0,4626</text>
<text x="838.2142857142858" y="626.15" font-size="15" fill="#f4f4f4" transform="scale(1.4,1)">0,5021</text>
<rect x="586.0" y="632.0" width="679.8" height="24.34999999999999" fill="#434343"/>
<text x="430.0714285714286" y="650.3" font-size="15" font-weight="bold" fill="#f4f4f4" transform="scale(1.4,1)">Y</text>
<text x="552.5" y="650.3" font-size="15" fill="#f4f4f4" transform="scale(1.4,1)">176,4887</text>
<text x="623.9285714285714" y="650.3" font-size="15" fill="#f4f4f4" transform="scale(1.4,1)">173,3268</text>
<text x="695.3571428571429" y="650.3" font-size="15" fill="#f4f4f4" transform="scale(1.4,1)">170,3285</text>
<text x="766.7857142857143" y="650.3" font-size="15" fill="#f4f4f4" transform="scale(1.4,1)">168,0693</text>
<text x="838.2142857142858" y="650.3" font-size="15" fill="#f4f4f4" transform="scale(1.4,1)">164,1606</text>
<rect x="586.0" y="656.15" width="679.8" height="24.34999999999999" fill="#7e7e7e"/>
<text x="430.0714285714286" y="674.4499999999999" font-size="15" font-weight="bold" fill="#f4f4f4" transform="scale(1.4,1)">Target x:CIE31</text>
<text x="552.5" y="674.4499999999999" font-size="15" fill="#f4f4f4" transform="scale(1.4,1)">0,3344</text>
<text x="623.9285714285714" y="674.4499999999999" font-size="15" fill="#f4f4f4" transform="scale(1.4,1)">0,3564</text>
<text x="695.3571428571429" y="674.4499999999999" font-size="15" fill="#f4f4f4" transform="scale(1.4,1)">0,3773</text>
<text x="766.7857142857143" y="674.4499999999999" font-size="15" fill="#f4f4f4" transform="scale(1.4,1)">0,3969</text>
<text x="838.2142857142858" y="674.4499999999999" font-size="15" fill="#f4f4f4" transform="scale(1.4,1)">0,4193</text>
<rect x="586.0" y="680.3" width="679.8" height="24.34999999999999" fill="#434343"/>
<text x="430.0714285714286" y="698.5999999999999" font-size="15" font-weight="bold" fill="#f4f4f4" transform="scale(1.4,1)">Target y:CIE31</text>
<text x="552.5" y="698.5999999999999" font-size="15" fill="#f4f4f4" transform="scale(1.4,1)">0,3648</text>
<text x="623.9285714285714" y="698.5999999999999" font-size="15" fill="#f4f4f4" transform="scale(1.4,1)">0,4013</text>
<text x="695.3571428571429" y="698.5999999999999" font-size="15" fill="#f4f4f4" transform="scale(1.4,1)">0,4358</text>
<text x="766.7857142857143" y="698.5999999999999" font-size="15" fill="#f4f4f4" transform="scale(1.4,1)">0,4682</text>
<text x="838.2142857142858" y="698.5999999999999" font-size="15" fill="#f4f4f4" transform="scale(1.4,1)">0,5053</text>
<rect x="586.0" y="704.45" width="679.8" height="24.34999999999999" fill="#7e7e7e"/>
<text x="430.0714285714286" y="722.75" font-size="15" font-weight="bold" fill="#f4f4f4" transform="scale(1.4,1)">Target Y</text>
<text x="552.5" y="722.75" font-size="15" fill="#f4f4f4" transform="scale(1.4,1)">166,3679</text>
<text x="623.9285714285714" y="722.75" font-size="15" fill="#f4f4f4" transform="scale(1.4,1)">163,4477</text>
<text x="695.3571428571429" y="722.75" font-size="15" fill="#f4f4f4" transform="scale(1.4,1)">161,2039</text>
<text x="766.7857142857143" y="722.75" font-size="15" fill="#f4f4f4" transform="scale(1.4,1)">159,4430</text>
<text x="838.2142857142858" y="722.75" font-size="15" fill="#f4f4f4" transform="scale(1.4,1)">157,7405</text>
<rect x="586.0" y="728.6" width="679.8" height="24.34999999999999" fill="#434343"/>
<text x="430.0714285714286" y="746.9" font-size="15" font-weight="bold" fill="#f4f4f4" transform="scale(1.4,1)">ΔE 2000</text>
<text x="552.5" y="746.9" font-size="15" fill="#f4f4f4" transform="scale(1.4,1)">3,6887</text>
<text x="623.9285714285714" y="746.9" font-size="15" fill="#f4f4f4" transform="scale(1.4,1)">3,1000</text>
<text x="695.3571428571429" y="746.9" font-size="15" fill="#f4f4f4" transform="scale(1.4,1)">2,7849</text>
<text x="766.7857142857143" y="746.9" font-size="15" fill="#f4f4f4" transform="scale(1.4,1)">2,7465</text>
<text x="838.2142857142858" y="746.9" font-size="15" fill="#f4f4f4" transform="scale(1.4,1)">2,8440</text>
<rect x="586.0" y="752.75" width="679.8" height="24.34999999999999" fill="#7e7e7e"/>
<text x="430.0714285714286" y="771.05" font-size="15" font-weight="bold" fill="#f4f4f4" transform="scale(1.4,1)">ΔE ITP</text>
<text x="552.5" y="771.05" font-size="15" fill="#f4f4f4" transform="scale(1.4,1)">5,9113</text>
<text x="623.9285714285714" y="771.05" font-size="15" fill="#f4f4f4" transform="scale(1.4,1)">6,5314</text>
<text x="695.3571428571429" y="771.05" font-size="15" fill="#f4f4f4" transform="scale(1.4,1)">6,5068</text>
<text x="766.7857142857143" y="771.05" font-size="15" fill="#f4f4f4" transform="scale(1.4,1)">6,7219</text>
<text x="838.2142857142858" y="771.05" font-size="15" fill="#f4f4f4" transform="scale(1.4,1)">7,7324</text>
<text x="583.7857142857143" y="576" font-size="14" font-weight="bold" fill="#f4f4f4" text-anchor="middle" transform="scale(1.4,1)">20%</text>
<text x="655.2142857142858" y="576" font-size="14" font-weight="bold" fill="#f4f4f4" text-anchor="middle" transform="scale(1.4,1)">40%</text>
<text x="726.6428571428571" y="576" font-size="14" font-weight="bold" fill="#f4f4f4" text-anchor="middle" transform="scale(1.4,1)">60%</text>
<text x="798.0714285714286" y="576" font-size="14" font-weight="bold" fill="#f4f4f4" text-anchor="middle" transform="scale(1.4,1)">80%</text>
<text x="869.5" y="576" font-size="14" font-weight="bold" fill="#f4f4f4" text-anchor="middle" transform="scale(1.4,1)">100%</text>
<rect x="911.8" y="29.5" width="646" height="516.8" fill="#333333" stroke="#c6c300" stroke-width="6.8"/>
<rect x="950.3" y="54.6" width="600.4" height="461.7" fill="#252525"/><g clip-path="url(#plotclip)"><clipPath id="plotclip"><rect x="950.3" y="54.6" width="600.4" height="461.7"/></clipPath><defs>
<clipPath id="locclip"><path d="M1206.6 502.7 L1206.5 502.8 L1206.4 502.8 L1206.3 502.8 L1206.1 502.8 L1206.0 502.9 L1205.9 503.0 L1205.7 503.1 L1205.5 503.2 L1205.2 503.2 L1205.0 503.2 L1204.6 503.2 L1204.2 503.2 L1203.8 503.0 L1203.2 502.9 L1202.6 502.7 L1202.0 502.4 L1201.4 502.1 L1200.8 501.7 L1200.1 501.2 L1199.4 500.7 L1198.6 500.1 L1197.8 499.5 L1196.9 498.8 L1195.8 498.0 L1194.7 497.1 L1193.5 496.2 L1192.2 495.1 L1190.9 494.0 L1189.4 492.8 L1187.9 491.5 L1186.3 490.1 L1184.5 488.6 L1182.7 487.0 L1180.8 485.4 L1178.7 483.7 L1176.5 481.8 L1174.1 479.9 L1171.5 477.8 L1168.8 475.5 L1165.9 473.2 L1163.0 470.7 L1159.9 468.1 L1156.6 465.4 L1153.1 462.4 L1149.5 459.3 L1145.7 456.0 L1141.7 452.4 L1137.6 448.4 L1133.2 444.3 L1128.8 439.9 L1124.1 435.0 L1118.9 429.4 L1113.2 422.9 L1107.2 415.7 L1100.8 407.9 L1094.1 399.3 L1087.1 390.1 L1079.8 380.1 L1072.3 369.5 L1064.7 358.2 L1056.9 346.3 L1048.9 333.6 L1040.8 320.5 L1032.9 307.2 L1025.0 293.6 L1017.1 279.7 L1009.5 265.7 L1002.3 252.0 L995.7 238.4 L989.5 224.8 L983.7 211.6 L978.4 199.0 L973.6 186.9 L969.3 175.4 L965.5 164.4 L962.1 154.2 L959.3 144.9 L957.1 136.3 L955.2 128.3 L953.8 121.0 L952.7 114.3 L952.0 108.4 L951.7 102.9 L951.7 97.9 L952.0 93.3 L952.7 89.1 L953.7 85.4 L954.9 82.0 L956.4 78.9 L958.3 76.3 L960.3 73.9 L962.5 71.9 L965.0 70.2 L967.6 68.8 L970.4 67.7 L973.4 66.7 L976.4 66.0 L979.6 65.5 L982.9 65.1 L986.2 64.8 L989.6 64.6 L993.2 64.5 L996.7 64.4 L1000.3 64.4 L1003.8 64.4 L1007.3 64.4 L1010.9 64.4 L1014.5 64.5 L1018.1 64.7 L1021.8 64.8 L1025.5 65.0 L1029.4 65.2 L1033.2 65.5 L1037.2 65.8 L1041.2 66.1 L1045.3 66.4 L1049.6 66.7 L1053.9 67.1 L1058.2 67.5 L1062.8 68.0 L1067.4 68.4 L1072.1 68.9 L1076.9 69.4 L1081.9 69.9 L1087.0 70.4 L1092.2 71.0 L1097.6 71.6 L1103.1 72.2 L1108.7 72.8 L1114.5 73.4 L1120.4 74.1 L1126.5 74.8 L1132.8 75.5 L1139.2 76.2 L1145.7 77.0 L1152.4 77.7 L1159.3 78.5 L1166.4 79.3 L1173.6 80.2 L1180.9 81.0 L1188.5 81.9 L1196.2 82.8 L1204.1 83.7 L1212.1 84.6 L1220.2 85.5 L1228.6 86.5 L1237.0 87.5 L1245.6 88.4 L1254.3 89.4 L1263.1 90.5 L1272.1 91.5 L1281.0 92.5 L1290.1 93.6 L1299.3 94.6 L1308.5 95.7 L1317.6 96.7 L1326.5 97.8 L1335.4 98.8 L1344.2 99.8 L1352.9 100.8 L1361.7 101.8 L1370.4 102.8 L1379.0 103.8 L1387.3 104.8 L1395.4 105.7 L1403.3 106.6 L1411.0 107.5 L1418.4 108.3 L1425.6 109.2 L1432.6 110.0 L1439.4 110.7 L1445.9 111.5 L1451.8 112.2 L1457.1 112.8 L1462.7 113.4 L1469.4 114.2 L1477.7 115.2 L1487.3 116.3 L1496.9 117.4 L1505.6 118.4 L1513.1 119.2 L1520.0 120.0 L1526.3 120.8 L1532.0 121.4 L1537.2 122.0 L1541.8 122.5 L1545.8 123.0 L1549.4 123.4 L1552.6 123.8 L1555.1 124.1 L1557.4 124.3 L1559.8 124.6 L1562.3 124.9 L1564.8 125.2 L1567.0 125.4 L1568.9 125.7 L1570.2 125.8 L1571.2 125.9 L1571.8 126.0 L1572.3 126.1 Z"/></clipPath>
<linearGradient id="fbL" x1="0" y1="60" x2="0" y2="500" gradientUnits="userSpaceOnUse"><stop offset="0" stop-color="#009a00"/><stop offset="0.2" stop-color="#009a40"/><stop offset="0.26" stop-color="#009999"/><stop offset="0.45" stop-color="#0040a0"/><stop offset="1" stop-color="#0000a0"/></linearGradient>
<linearGradient id="fbP" x1="1125" y1="450" x2="1550" y2="120" gradientUnits="userSpaceOnUse"><stop offset="0" stop-color="#10009a"/><stop offset="0.5" stop-color="#990080"/><stop offset="1" stop-color="#990000"/></linearGradient>
<linearGradient id="fbU" x1="1075" y1="0" x2="1550" y2="0" gradientUnits="userSpaceOnUse"><stop offset="0" stop-color="#4a9a00"/><stop offset="0.2" stop-color="#999900"/><stop offset="0.5" stop-color="#995000"/><stop offset="1" stop-color="#990000"/></linearGradient>
<linearGradient id="fg" x1="1075" y1="83" x2="1256.0" y2="260.1" gradientUnits="userSpaceOnUse"><stop offset="0" stop-color="#00ff00"/><stop offset="0.5" stop-color="#00ff00" stop-opacity="0.8"/><stop offset="1" stop-color="#00ff00" stop-opacity="0"/></linearGradient>
<linearGradient id="fr" x1="1400" y1="113" x2="1087.9" y2="163.2" gradientUnits="userSpaceOnUse"><stop offset="0" stop-color="#ff0000"/><stop offset="0.5" stop-color="#ff0000" stop-opacity="0.8"/><stop offset="1" stop-color="#ff0000" stop-opacity="0"/></linearGradient>
<linearGradient id="fb" x1="1125" y1="394" x2="1153.0" y2="90.2" gradientUnits="userSpaceOnUse"><stop offset="0" stop-color="#0000ff"/><stop offset="0.5" stop-color="#0000ff" stop-opacity="0.8"/><stop offset="1" stop-color="#0000ff" stop-opacity="0"/></linearGradient>
<radialGradient id="fbW" cx="1147" cy="155" r="95" gradientUnits="userSpaceOnUse"><stop offset="0" stop-color="#fff"/><stop offset="0.4" stop-color="#fff" stop-opacity="0.7"/><stop offset="1" stop-color="#fff" stop-opacity="0"/></radialGradient>
</defs>
<g clip-path="url(#locclip)">
<path d="M1206.6 502.7 L1206.5 502.8 L1206.4 502.8 L1206.3 502.8 L1206.1 502.8 L1206.0 502.9 L1205.9 503.0 L1205.7 503.1 L1205.5 503.2 L1205.2 503.2 L1205.0 503.2 L1204.6 503.2 L1204.2 503.2 L1203.8 503.0 L1203.2 502.9 L1202.6 502.7 L1202.0 502.4 L1201.4 502.1 L1200.8 501.7 L1200.1 501.2 L1199.4 500.7 L1198.6 500.1 L1197.8 499.5 L1196.9 498.8 L1195.8 498.0 L1194.7 497.1 L1193.5 496.2 L1192.2 495.1 L1190.9 494.0 L1189.4 492.8 L1187.9 491.5 L1186.3 490.1 L1184.5 488.6 L1182.7 487.0 L1180.8 485.4 L1178.7 483.7 L1176.5 481.8 L1174.1 479.9 L1171.5 477.8 L1168.8 475.5 L1165.9 473.2 L1163.0 470.7 L1159.9 468.1 L1156.6 465.4 L1153.1 462.4 L1149.5 459.3 L1145.7 456.0 L1141.7 452.4 L1137.6 448.4 L1133.2 444.3 L1128.8 439.9 L1124.1 435.0 L1118.9 429.4 L1113.2 422.9 L1107.2 415.7 L1100.8 407.9 L1094.1 399.3 L1087.1 390.1 L1079.8 380.1 L1072.3 369.5 L1064.7 358.2 L1056.9 346.3 L1048.9 333.6 L1040.8 320.5 L1032.9 307.2 L1025.0 293.6 L1017.1 279.7 L1009.5 265.7 L1002.3 252.0 L995.7 238.4 L989.5 224.8 L983.7 211.6 L978.4 199.0 L973.6 186.9 L969.3 175.4 L965.5 164.4 L962.1 154.2 L959.3 144.9 L957.1 136.3 L955.2 128.3 L953.8 121.0 L952.7 114.3 L952.0 108.4 L951.7 102.9 L951.7 97.9 L952.0 93.3 L952.7 89.1 L953.7 85.4 L954.9 82.0 L956.4 78.9 L958.3 76.3 L960.3 73.9 L962.5 71.9 L965.0 70.2 L967.6 68.8 L970.4 67.7 L973.4 66.7 L976.4 66.0 L979.6 65.5 L982.9 65.1 L986.2 64.8 L989.6 64.6 L993.2 64.5 L996.7 64.4 L1000.3 64.4 L1003.8 64.4 L1007.3 64.4 L1010.9 64.4 L1014.5 64.5 L1018.1 64.7 L1021.8 64.8 L1025.5 65.0 L1029.4 65.2 L1033.2 65.5 L1037.2 65.8 L1041.2 66.1 L1045.3 66.4 L1049.6 66.7 L1053.9 67.1 L1058.2 67.5 L1062.8 68.0 L1067.4 68.4 L1072.1 68.9 L1076.9 69.4 L1081.9 69.9 L1087.0 70.4 L1092.2 71.0 L1097.6 71.6 L1103.1 72.2 L1108.7 72.8 L1114.5 73.4 L1120.4 74.1 L1126.5 74.8 L1132.8 75.5 L1139.2 76.2 L1145.7 77.0 L1152.4 77.7 L1159.3 78.5 L1166.4 79.3 L1173.6 80.2 L1180.9 81.0 L1188.5 81.9 L1196.2 82.8 L1204.1 83.7 L1212.1 84.6 L1220.2 85.5 L1228.6 86.5 L1237.0 87.5 L1245.6 88.4 L1254.3 89.4 L1263.1 90.5 L1272.1 91.5 L1281.0 92.5 L1290.1 93.6 L1299.3 94.6 L1308.5 95.7 L1317.6 96.7 L1326.5 97.8 L1335.4 98.8 L1344.2 99.8 L1352.9 100.8 L1361.7 101.8 L1370.4 102.8 L1379.0 103.8 L1387.3 104.8 L1395.4 105.7 L1403.3 106.6 L1411.0 107.5 L1418.4 108.3 L1425.6 109.2 L1432.6 110.0 L1439.4 110.7 L1445.9 111.5 L1451.8 112.2 L1457.1 112.8 L1462.7 113.4 L1469.4 114.2 L1477.7 115.2 L1487.3 116.3 L1496.9 117.4 L1505.6 118.4 L1513.1 119.2 L1520.0 120.0 L1526.3 120.8 L1532.0 121.4 L1537.2 122.0 L1541.8 122.5 L1545.8 123.0 L1549.4 123.4 L1552.6 123.8 L1555.1 124.1 L1557.4 124.3 L1559.8 124.6 L1562.3 124.9 L1564.8 125.2 L1567.0 125.4 L1568.9 125.7 L1570.2 125.8 L1571.2 125.9 L1571.8 126.0 L1572.3 126.1 Z" fill="url(#fbL)"/>
<path d="M1125 394 L1206 560 L1600 560 L1600 80 L1400 113 Z" fill="url(#fbP)"/>
<path d="M1075 83 L1000 40 L1600 40 L1600 110 L1400 113 Z" fill="url(#fbU)"/>
<path d="M1075 83 L1400 113 L1125 394 Z" fill="#000"/>
<g style="isolation:isolate"><path d="M1075 83 L1400 113 L1125 394 Z" fill="#000"/><path d="M1075 83 L1400 113 L1125 394 Z" fill="url(#fg)" style="mix-blend-mode:screen"/><path d="M1075 83 L1400 113 L1125 394 Z" fill="url(#fr)" style="mix-blend-mode:screen"/><path d="M1075 83 L1400 113 L1125 394 Z" fill="url(#fb)" style="mix-blend-mode:screen"/><path d="M1075 83 L1400 113 L1125 394 Z" fill="url(#fbW)"/></g>
</g>
<rect x="1346" y="374" width="199" height="135" fill="#8a8a00"/><path d="M1346 388.5 L1545 494 V509 H1346 Z" fill="#e8ff00"/></g>
<linearGradient id="seltab" x1="0" y1="0" x2="0" y2="1"><stop offset="0" stop-color="#1a1a1a"/><stop offset="1" stop-color="#303030"/></linearGradient>
<rect x="0" y="798" width="1558" height="60" fill="url(#darkbar)"/>
<path d="M0 799 H37 Q41 799 41 803 V858 H0 Z" fill="url(#tab)"/>
<circle cx="18.4" cy="808.4" r="7" fill="url(#circ)"/>
<path d="M14.2 810.8 L22.6 810.8 L18.4 806.2 Z" fill="#111"/>
<rect x="1.6" y="825.5" width="34.4" height="29.6" rx="4" fill="#ffff00" stroke="#8a8a00" stroke-width="0.8"/>
<path d="M47.3 858 V804 Q47.3 799 52.3 799 H191.5 Q196.5 799 196.5 804 V858 Z" fill="url(#tab)"/>
<rect x="52.5" y="804.5" width="139.2" height="35.3" rx="3.5" fill="#c0c1a5" stroke="#8a8a70" stroke-width="0.6"/>
<text x="121.9" y="855" font-size="11" fill="#2a2a2a" text-anchor="middle" font-weight="normal">20%</text>
<path d="M198.9 858 V804 Q198.9 799 203.9 799 H343.4 Q348.4 799 348.4 804 V858 Z" fill="url(#tab)"/>
<rect x="204.1" y="804.5" width="139.49999999999997" height="35.3" rx="3.5" fill="#c0c186" stroke="#8a8a70" stroke-width="0.6"/>
<text x="273.65" y="855" font-size="11" fill="#2a2a2a" text-anchor="middle" font-weight="normal">40%</text>
<path d="M351.1 858 V804 Q351.1 799 356.1 799 H495.6 Q500.6 799 500.6 804 V858 Z" fill="url(#tab)"/>
<rect x="356.3" y="804.5" width="139.5" height="35.3" rx="3.5" fill="#bfc06a" stroke="#8a8a70" stroke-width="0.6"/>
<text x="425.85" y="855" font-size="11" fill="#2a2a2a" text-anchor="middle" font-weight="normal">60%</text>
<path d="M503.1 858 V804 Q503.1 799 508.1 799 H647.8 Q652.8 799 652.8 804 V858 Z" fill="url(#tab)"/>
<rect x="508.3" y="804.5" width="139.69999999999993" height="35.3" rx="3.5" fill="#bfc04b" stroke="#8a8a70" stroke-width="0.6"/>
<text x="577.95" y="855" font-size="11" fill="#2a2a2a" text-anchor="middle" font-weight="normal">80%</text>
<path d="M655 858 V804 Q655 799 660 799 H799.6 Q804.6 799 804.6 804 V858 Z" fill="url(#seltab)"/>
<rect x="660.2" y="804.5" width="139.60000000000002" height="35.3" rx="3.5" fill="#c3c000" stroke="#222" stroke-width="0.6"/>
<text x="729.8" y="855" font-size="11" fill="#ffffff" text-anchor="middle" font-weight="bold">100%</text>
<path d="M1238 858 V803 Q1238 799 1242 799 H1286 V858 Z" fill="url(#btn)"/>
<line x1="1238" y1="817.3" x2="1286" y2="817.3" stroke="#3a3a3a" stroke-width="1.2"/>
<circle cx="1262.5" cy="807.8" r="7.5" fill="url(#circ)"/>
<path d="M1258 809.8 L1267 809.8 L1262.5 805 Z" fill="#222"/>
<rect x="1247.5" y="824.5" width="29" height="28.5" rx="5" fill="#b0b0b0" stroke="#222" stroke-width="2.6"/>
<rect x="1249" y="839" width="26" height="12.8" fill="#8a8a8a"/>
<rect x="1255" y="832.2" width="13.5" height="13.2" fill="#000"/>
<rect x="1286.8" y="799" width="272" height="59" fill="#3a3a3a"/>
<rect x="1287.8999999999999" y="799" width="44.80000000000018" height="29.3" fill="url(#btn)"/>
<rect x="1333.8999999999999" y="799" width="44.00000000000023" height="29.3" fill="url(#btn)"/>
<rect x="1379.1" y="799" width="43.600000000000136" height="29.3" fill="url(#btn)"/>
<rect x="1423.8999999999999" y="799" width="43.90000000000032" height="29.3" fill="url(#btn)"/>
<rect x="1469.0" y="799" width="44.0" height="29.3" fill="url(#btn)"/>
<rect x="1514.1999999999998" y="799" width="44.20000000000027" height="29.3" fill="url(#btn)"/>
<rect x="1287.8" y="830" width="134.9000000000001" height="28" fill="url(#btn)"/>
<rect x="1423.9" y="830" width="135.0999999999999" height="28" fill="url(#btn)"/>
<circle cx="1309.8" cy="814" r="10" fill="url(#circ)"/>
<circle cx="1355.8" cy="814" r="10" fill="url(#circ)"/>
<circle cx="1401.1" cy="814" r="10" fill="url(#circ)"/>
<circle cx="1445.9" cy="814" r="10" fill="url(#circ)"/>
<circle cx="1490.7" cy="814" r="10" fill="url(#circ)"/>
<circle cx="1536.6" cy="814" r="10" fill="url(#circ)"/>
<rect x="1306" y="810" width="8" height="8" fill="#2a2a2a"/>
<path d="M1353 810 L1361.6 814.7 L1353 819.4 Z" fill="#2a2a2a"/>
<path d="M1396.5 810.3 H1394.8 V819.2 H1396.5 M1405.3 810.3 H1407 V819.2 H1405.3" fill="none" stroke="#2a2a2a" stroke-width="1.9"/>
<rect x="1398.8" y="814.3" width="1.6" height="1.6" fill="#2a2a2a"/><rect x="1401.6" y="814.3" width="1.6" height="1.6" fill="#2a2a2a"/>
<path d="M1446 813.8 C1444 811.2 1440 811.2 1440 813.8 C1440 816.4 1444 816.4 1446 813.8 C1448 811.2 1452 811.2 1452 813.8 C1452 816.4 1448 816.4 1446 813.8 Z" fill="none" stroke="#2a2a2a" stroke-width="1.8"/>
<path d="M1486.6 814.5 A4.6 4.6 0 0 1 1494.5 810.8 M1495.2 813.8 A4.6 4.6 0 0 1 1487.2 817.3" fill="none" stroke="#2a2a2a" stroke-width="2"/>
<path d="M1492.6 808.6 L1496.4 808.3 L1496 812.4 Z M1489.2 819.8 L1485.4 820.2 L1485.8 816 Z" fill="#2a2a2a" stroke="#2a2a2a" stroke-width="0.8"/>
<circle cx="1317.9" cy="845" r="10" fill="url(#circ)"/>
<circle cx="1530.9" cy="845" r="10" fill="url(#circ)"/>
<path d="M1318 840.6 L1313.8 845.1 L1318 849.6 M1322.3 840.6 L1318.1 845.1 L1322.3 849.6" fill="none" stroke="#2a2a2a" stroke-width="1.4"/>
<path d="M1527.4 840.6 L1531.6 845.1 L1527.4 849.6 M1531.7 840.6 L1535.9 845.1 L1531.7 849.6" fill="none" stroke="#2a2a2a" stroke-width="1.4"/>
<text x="1344.9" y="852.6" font-size="21.5" fill="#2e2e2e" stroke="#2e2e2e" stroke-width="0.7" textLength="50" lengthAdjust="spacingAndGlyphs">Back</text>
<text x="1451.6" y="852.6" font-size="21.5" fill="#2e2e2e" stroke="#2e2e2e" stroke-width="0.7" textLength="51.2" lengthAdjust="spacingAndGlyphs">Next</text>
</svg>
<canvas id="cie" width="601" height="463" style="left:950px;top:54px"></canvas>
<canvas id="ins" width="199" height="135" style="left:1346px;top:374px"></canvas>
<svg id="over" width="1558" height="858" viewBox="0 0 1558 858">
<text x="1234.2" y="49.5" font-size="12.6" fill="#cfcfcf" text-anchor="middle" textLength="79" lengthAdjust="spacingAndGlyphs">CIE 1976 u'v'</text>
<path d="M950.3 54.6 H1550.7 V516.3 H950.3 Z" fill="none" stroke="#9a9a9a" stroke-width="1.4"/>
<line x1="944.5" y1="516.3" x2="950.3" y2="516.3" stroke="#9a9a9a" stroke-width="1.5"/>
<text x="943.5" y="521.9" font-size="12.6" fill="#d4d4d4" text-anchor="end" font-weight="normal">0</text>
<line x1="944.5" y1="477.9" x2="950.3" y2="477.9" stroke="#9a9a9a" stroke-width="1.5"/>
<text x="943.5" y="483.51" font-size="12.6" fill="#d4d4d4" text-anchor="end" font-weight="normal">0,05</text>
<line x1="944.5" y1="439.5" x2="950.3" y2="439.5" stroke="#9a9a9a" stroke-width="1.5"/>
<text x="943.5" y="445.12" font-size="12.6" fill="#d4d4d4" text-anchor="end" font-weight="normal">0,1</text>
<line x1="944.5" y1="401.1" x2="950.3" y2="401.1" stroke="#9a9a9a" stroke-width="1.5"/>
<text x="943.5" y="406.72999999999996" font-size="12.6" fill="#d4d4d4" text-anchor="end" font-weight="normal">0,15</text>
<line x1="944.5" y1="362.7" x2="950.3" y2="362.7" stroke="#9a9a9a" stroke-width="1.5"/>
<text x="943.5" y="368.34" font-size="12.6" fill="#d4d4d4" text-anchor="end" font-weight="normal">0,2</text>
<line x1="944.5" y1="324.3" x2="950.3" y2="324.3" stroke="#9a9a9a" stroke-width="1.5"/>
<text x="943.5" y="329.95" font-size="12.6" fill="#d4d4d4" text-anchor="end" font-weight="normal">0,25</text>
<line x1="944.5" y1="286.0" x2="950.3" y2="286.0" stroke="#9a9a9a" stroke-width="1.5"/>
<text x="943.5" y="291.55999999999995" font-size="12.6" fill="#d4d4d4" text-anchor="end" font-weight="normal">0,3</text>
<line x1="944.5" y1="247.6" x2="950.3" y2="247.6" stroke="#9a9a9a" stroke-width="1.5"/>
<text x="943.5" y="253.16999999999993" font-size="12.6" fill="#d4d4d4" text-anchor="end" font-weight="normal">0,35</text>
<line x1="944.5" y1="209.2" x2="950.3" y2="209.2" stroke="#9a9a9a" stroke-width="1.5"/>
<text x="943.5" y="214.77999999999994" font-size="12.6" fill="#d4d4d4" text-anchor="end" font-weight="normal">0,4</text>
<line x1="944.5" y1="170.8" x2="950.3" y2="170.8" stroke="#9a9a9a" stroke-width="1.5"/>
<text x="943.5" y="176.38999999999996" font-size="12.6" fill="#d4d4d4" text-anchor="end" font-weight="normal">0,45</text>
<line x1="944.5" y1="132.4" x2="950.3" y2="132.4" stroke="#9a9a9a" stroke-width="1.5"/>
<text x="943.5" y="137.99999999999997" font-size="12.6" fill="#d4d4d4" text-anchor="end" font-weight="normal">0,5</text>
<line x1="944.5" y1="94.0" x2="950.3" y2="94.0" stroke="#9a9a9a" stroke-width="1.5"/>
<text x="943.5" y="99.60999999999993" font-size="12.6" fill="#d4d4d4" text-anchor="end" font-weight="normal">0,55</text>
<line x1="950.3" y1="516.3" x2="950.3" y2="521.5" stroke="#9a9a9a" stroke-width="1.5"/>
<text x="950.3" y="536.6" font-size="12.6" fill="#d4d4d4" text-anchor="middle" font-weight="normal">0</text>
<line x1="1000.2" y1="516.3" x2="1000.2" y2="521.5" stroke="#9a9a9a" stroke-width="1.5"/>
<text x="1000.2149999999999" y="536.6" font-size="12.6" fill="#d4d4d4" text-anchor="middle" font-weight="normal">0,05</text>
<line x1="1050.1" y1="516.3" x2="1050.1" y2="521.5" stroke="#9a9a9a" stroke-width="1.5"/>
<text x="1050.1299999999999" y="536.6" font-size="12.6" fill="#d4d4d4" text-anchor="middle" font-weight="normal">0,1</text>
<line x1="1100.0" y1="516.3" x2="1100.0" y2="521.5" stroke="#9a9a9a" stroke-width="1.5"/>
<text x="1100.045" y="536.6" font-size="12.6" fill="#d4d4d4" text-anchor="middle" font-weight="normal">0,15</text>
<line x1="1150.0" y1="516.3" x2="1150.0" y2="521.5" stroke="#9a9a9a" stroke-width="1.5"/>
<text x="1149.96" y="536.6" font-size="12.6" fill="#d4d4d4" text-anchor="middle" font-weight="normal">0,2</text>
<line x1="1199.9" y1="516.3" x2="1199.9" y2="521.5" stroke="#9a9a9a" stroke-width="1.5"/>
<text x="1199.875" y="536.6" font-size="12.6" fill="#d4d4d4" text-anchor="middle" font-weight="normal">0,25</text>
<line x1="1249.8" y1="516.3" x2="1249.8" y2="521.5" stroke="#9a9a9a" stroke-width="1.5"/>
<text x="1249.79" y="536.6" font-size="12.6" fill="#d4d4d4" text-anchor="middle" font-weight="normal">0,3</text>
<line x1="1299.7" y1="516.3" x2="1299.7" y2="521.5" stroke="#9a9a9a" stroke-width="1.5"/>
<text x="1299.705" y="536.6" font-size="12.6" fill="#d4d4d4" text-anchor="middle" font-weight="normal">0,35</text>
<line x1="1349.6" y1="516.3" x2="1349.6" y2="521.5" stroke="#9a9a9a" stroke-width="1.5"/>
<text x="1349.62" y="536.6" font-size="12.6" fill="#d4d4d4" text-anchor="middle" font-weight="normal">0,4</text>
<line x1="1399.5" y1="516.3" x2="1399.5" y2="521.5" stroke="#9a9a9a" stroke-width="1.5"/>
<text x="1399.5349999999999" y="536.6" font-size="12.6" fill="#d4d4d4" text-anchor="middle" font-weight="normal">0,45</text>
<line x1="1449.4" y1="516.3" x2="1449.4" y2="521.5" stroke="#9a9a9a" stroke-width="1.5"/>
<text x="1449.4499999999998" y="536.6" font-size="12.6" fill="#d4d4d4" text-anchor="middle" font-weight="normal">0,5</text>
<line x1="1499.4" y1="516.3" x2="1499.4" y2="521.5" stroke="#9a9a9a" stroke-width="1.5"/>
<text x="1499.365" y="536.6" font-size="12.6" fill="#d4d4d4" text-anchor="middle" font-weight="normal">0,55</text>
<rect x="1068.0" y="76.5" width="13" height="13" fill="rgba(255,255,255,0.12)" stroke="#f4f4f4" stroke-width="1.6"/>
<rect x="1079.5" y="87.3" width="13" height="13" fill="rgba(255,255,255,0.12)" stroke="#f4f4f4" stroke-width="1.6"/>
<rect x="1091.1" y="99.3" width="13" height="13" fill="rgba(255,255,255,0.12)" stroke="#f4f4f4" stroke-width="1.6"/>
<rect x="1105.7" y="113.3" width="13" height="13" fill="rgba(255,255,255,0.12)" stroke="#f4f4f4" stroke-width="1.6"/>
<rect x="1121.5" y="128.5" width="13" height="13" fill="rgba(255,255,255,0.12)" stroke="#f4f4f4" stroke-width="1.6"/>
<rect x="1147.5" y="83.3" width="13" height="13" fill="rgba(255,255,255,0.12)" stroke="#f4f4f4" stroke-width="1.6"/>
<rect x="1145.5" y="95.1" width="13" height="13" fill="rgba(255,255,255,0.12)" stroke="#f4f4f4" stroke-width="1.6"/>
<rect x="1145.0" y="106.9" width="13" height="13" fill="rgba(255,255,255,0.12)" stroke="#f4f4f4" stroke-width="1.6"/>
<rect x="1144.5" y="118.9" width="13" height="13" fill="rgba(255,255,255,0.12)" stroke="#f4f4f4" stroke-width="1.6"/>
<rect x="1143.7" y="131.8" width="13" height="13" fill="rgba(255,255,255,0.12)" stroke="#f4f4f4" stroke-width="1.6"/>
<rect x="1082.5" y="159.4" width="13" height="13" fill="rgba(255,255,255,0.12)" stroke="#f4f4f4" stroke-width="1.6"/>
<rect x="1093.9" y="156.3" width="13" height="13" fill="rgba(255,255,255,0.12)" stroke="#f4f4f4" stroke-width="1.6"/>
<rect x="1105.7" y="155.3" width="13" height="13" fill="rgba(255,255,255,0.12)" stroke="#f4f4f4" stroke-width="1.6"/>
<rect x="1117.7" y="152.5" width="13" height="13" fill="rgba(255,255,255,0.12)" stroke="#f4f4f4" stroke-width="1.6"/>
<rect x="1129.6" y="151.4" width="13" height="13" fill="rgba(255,255,255,0.12)" stroke="#f4f4f4" stroke-width="1.6"/>
<rect x="1393.4" y="106.4" width="13" height="13" fill="rgba(255,255,255,0.12)" stroke="#f4f4f4" stroke-width="1.6"/>
<rect x="1333.3" y="116.3" width="13" height="13" fill="rgba(255,255,255,0.12)" stroke="#f4f4f4" stroke-width="1.6"/>
<rect x="1282.6" y="125.4" width="13" height="13" fill="rgba(255,255,255,0.12)" stroke="#f4f4f4" stroke-width="1.6"/>
<rect x="1236.5" y="132.4" width="13" height="13" fill="rgba(255,255,255,0.12)" stroke="#f4f4f4" stroke-width="1.6"/>
<rect x="1186.6" y="141.2" width="13" height="13" fill="rgba(255,255,255,0.12)" stroke="#f4f4f4" stroke-width="1.6"/>
<rect x="1248.3" y="254.4" width="13" height="13" fill="rgba(255,255,255,0.12)" stroke="#f4f4f4" stroke-width="1.6"/>
<rect x="1217.5" y="225.5" width="13" height="13" fill="rgba(255,255,255,0.12)" stroke="#f4f4f4" stroke-width="1.6"/>
<rect x="1193.3" y="201.5" width="13" height="13" fill="rgba(255,255,255,0.12)" stroke="#f4f4f4" stroke-width="1.6"/>
<rect x="1175.4" y="182.5" width="13" height="13" fill="rgba(255,255,255,0.12)" stroke="#f4f4f4" stroke-width="1.6"/>
<rect x="1157.4" y="164.6" width="13" height="13" fill="rgba(255,255,255,0.12)" stroke="#f4f4f4" stroke-width="1.6"/>
<rect x="1119.4" y="387.5" width="13" height="13" fill="rgba(255,255,255,0.12)" stroke="#f4f4f4" stroke-width="1.6"/>
<rect x="1126.3" y="307.2" width="13" height="13" fill="rgba(255,255,255,0.12)" stroke="#f4f4f4" stroke-width="1.6"/>
<rect x="1131.4" y="253.6" width="13" height="13" fill="rgba(255,255,255,0.12)" stroke="#f4f4f4" stroke-width="1.6"/>
<rect x="1135.4" y="211.5" width="13" height="13" fill="rgba(255,255,255,0.12)" stroke="#f4f4f4" stroke-width="1.6"/>
<rect x="1138.4" y="176.6" width="13" height="13" fill="rgba(255,255,255,0.12)" stroke="#f4f4f4" stroke-width="1.6"/>
<rect x="1140.4" y="148.5" width="13" height="13" fill="rgba(255,255,255,0.3)" stroke="#000" stroke-width="1.8"/>
<circle cx="1077.2" cy="82.3" r="4.0" fill="#12a812" stroke="#111" stroke-width="1.3"/>
<circle cx="1089.3" cy="94.3" r="4.0" fill="#48a848" stroke="#111" stroke-width="1.3"/>
<circle cx="1101.5" cy="105.4" r="4.0" fill="#62a862" stroke="#111" stroke-width="1.3"/>
<circle cx="1116.6" cy="120.4" r="4.0" fill="#78a878" stroke="#111" stroke-width="1.3"/>
<circle cx="1133.4" cy="136.2" r="4.0" fill="#88a888" stroke="#111" stroke-width="1.3"/>
<circle cx="1161.4" cy="88.9" r="4.0" fill="#b0b01a" stroke="#111" stroke-width="1.3"/>
<circle cx="1158.3" cy="101.4" r="4.0" fill="#b0b050" stroke="#111" stroke-width="1.3"/>
<circle cx="1157.3" cy="113.5" r="4.0" fill="#b0b06a" stroke="#111" stroke-width="1.3"/>
<circle cx="1154.4" cy="126" r="4.0" fill="#b0b080" stroke="#111" stroke-width="1.3"/>
<circle cx="1153.3" cy="140.3" r="4.0" fill="#b0b090" stroke="#111" stroke-width="1.3"/>
<circle cx="1087.5" cy="165.2" r="4.0" fill="#1ab0b0" stroke="#111" stroke-width="1.3"/>
<circle cx="1101.4" cy="163.1" r="4.0" fill="#50b0b0" stroke="#111" stroke-width="1.3"/>
<circle cx="1114.4" cy="160.3" r="4.0" fill="#6ab0b0" stroke="#111" stroke-width="1.3"/>
<circle cx="1128.5" cy="159.2" r="4.0" fill="#80b0b0" stroke="#111" stroke-width="1.3"/>
<circle cx="1138.3" cy="156.2" r="4.0" fill="#90b0b0" stroke="#111" stroke-width="1.3"/>
<circle cx="1403.6" cy="111.8" r="4.0" fill="#b01a1a" stroke="#111" stroke-width="1.3"/>
<circle cx="1347.3" cy="120.4" r="4.0" fill="#b05050" stroke="#111" stroke-width="1.3"/>
<circle cx="1291.3" cy="131.4" r="4.0" fill="#b06a6a" stroke="#111" stroke-width="1.3"/>
<circle cx="1246.2" cy="138.3" r="4.0" fill="#b08080" stroke="#111" stroke-width="1.3"/>
<circle cx="1193.1" cy="147.2" r="4.0" fill="#b09090" stroke="#111" stroke-width="1.3"/>
<circle cx="1254.3" cy="257.4" r="4.0" fill="#b01ab0" stroke="#111" stroke-width="1.3"/>
<circle cx="1223.4" cy="226" r="4.0" fill="#b050b0" stroke="#111" stroke-width="1.3"/>
<circle cx="1199.3" cy="202.4" r="4.0" fill="#b06ab0" stroke="#111" stroke-width="1.3"/>
<circle cx="1181.3" cy="184.5" r="4.0" fill="#b080b0" stroke="#111" stroke-width="1.3"/>
<circle cx="1165.2" cy="169.5" r="4.0" fill="#b090b0" stroke="#111" stroke-width="1.3"/>
<circle cx="1114.5" cy="390.6" r="4.0" fill="#1a1ab0" stroke="#111" stroke-width="1.3"/>
<circle cx="1128.2" cy="307.3" r="4.0" fill="#5050b0" stroke="#111" stroke-width="1.3"/>
<circle cx="1135.5" cy="256.3" r="4.0" fill="#6a6ab0" stroke="#111" stroke-width="1.3"/>
<circle cx="1143.5" cy="211.3" r="4.0" fill="#8080b0" stroke="#111" stroke-width="1.3"/>
<circle cx="1147.3" cy="180.2" r="4.0" fill="#9090b0" stroke="#111" stroke-width="1.3"/>
<circle cx="1149.2" cy="155.4" r="4.0" fill="#ffffff" stroke="#111" stroke-width="1.3"/>
<path d="M1344.2 372.4 H1547 V510.4 H1344.2 Z" fill="none" stroke="#333333" stroke-width="4"/>
<rect x="1346.2" y="374.4" width="198.7" height="134.2" fill="none" stroke="#9a9a9a" stroke-width="1"/>
<rect x="1437.4" y="434.4" width="13" height="13" fill="none" stroke="#f4f4f4" stroke-width="1.6"/>
<circle cx="1491.5" cy="449.4" r="4" fill="#c8c000" stroke="#111" stroke-width="1.3"/>
</svg>
<script>
(function(){
var LOC=[[380,0.17411,0.00496],[390,0.17380,0.00492],[400,0.17333,0.00480],[410,0.17258,0.00480],[420,0.17141,0.00510],[425,0.17030,0.00579],[430,0.16888,0.00690],[435,0.16690,0.00856],[440,0.16441,0.01086],[445,0.16111,0.01379],[450,0.15664,0.01770],[455,0.15099,0.02274],[460,0.14396,0.02970],[465,0.13550,0.03988],[470,0.12412,0.05780],[475,0.10959,0.08684],[480,0.09129,0.13270],[485,0.06871,0.20072],[490,0.04539,0.29498],[495,0.02346,0.41270],[500,0.00817,0.53842],[505,0.00386,0.65482],[510,0.01387,0.75019],[515,0.03885,0.81202],[520,0.07430,0.83380],[525,0.11416,0.82621],[530,0.15472,0.80586],[535,0.19288,0.78163],[540,0.22962,0.75433],[545,0.26578,0.72432],[550,0.30160,0.69231],[555,0.33736,0.65885],[560,0.37310,0.62445],[565,0.40874,0.58961],[570,0.44406,0.55471],[575,0.47877,0.52020],[580,0.51249,0.48659],[585,0.54479,0.45443],[590,0.57515,0.42423],[595,0.60293,0.39650],[600,0.62704,0.37249],[605,0.64823,0.35139],[610,0.66576,0.33401],[615,0.68008,0.31975],[620,0.69150,0.30834],[630,0.70792,0.29203],[640,0.71903,0.28093],[650,0.72599,0.27401],[660,0.72997,0.27003],[680,0.73342,0.26658],[700,0.73469,0.26531]];
var DARK=0.6, GAM=1;
function rgbFromXY(x,y,o,i){
  if(y<=1e-6){o[i]=0;o[i+1]=0;o[i+2]=0;return;}
  var X=x/y, Z=(1-x-y)/y;
  var R= 3.2406*X-1.5372-0.4986*Z;
  var G=-0.9689*X+1.8758+0.0415*Z;
  var B= 0.0557*X-0.2040+1.0570*Z;
  var out=(R<0||G<0||B<0);
  if(R<0)R=0; if(G<0)G=0; if(B<0)B=0;
  var m=Math.max(R,G,B); if(m<=0)m=1;
  R=Math.pow(R/m,GAM); G=Math.pow(G/m,GAM); B=Math.pow(B/m,GAM);
  var k=out?DARK:1;
  o[i]=R*255*k; o[i+1]=G*255*k; o[i+2]=B*255*k; o[i+3]=255;
}
// main plot
var c=document.getElementById('cie'); var ctx=c.getContext('2d');
var W=c.width,H=c.height,OX=950,OY=54;
function ux(u){return 950.3+997.8*u-OX;} function vy(v){return 515.4-768.7*v-OY;}
var off=document.createElement('canvas'); off.width=W; off.height=H;
var oc=off.getContext('2d'); var img=oc.createImageData(W,H); var d=img.data;
var tmp=[0,0,0,0], SS=[[0.25,0.25],[0.75,0.25],[0.25,0.75],[0.75,0.75]];
for(var py=0;py<H;py++){
  for(var px=0;px<W;px++){
    var r=0,g=0,b=0;
    for(var k=0;k<4;k++){
      var v=(515.4-(py+SS[k][1]+OY))/768.7;
      var u=(px+SS[k][0]+OX-950.3)/997.8;
      var den=6*u-16*v+12; var x=9*u/den, y=4*v/den;
      rgbFromXY(x,y,tmp,0); r+=tmp[0]; g+=tmp[1]; b+=tmp[2];
    }
    var i=(py*W+px)*4; d[i]=r/4; d[i+1]=g/4; d[i+2]=b/4; d[i+3]=255;
  }
}
oc.putImageData(img,0,0);
var P=[];
for(var i=0;i<LOC.length;i++){
  var x=LOC[i][1],y=LOC[i][2]; var den=-2*x+12*y+3; P.push([ux(4*x/den),vy(9*y/den)]);
}
ctx.beginPath(); ctx.moveTo(P[0][0],P[0][1]);
for(var i=0;i<P.length-1;i++){
  var p0=P[Math.max(0,i-1)],p1=P[i],p2=P[i+1],p3=P[Math.min(P.length-1,i+2)];
  for(var t=1;t<=8;t++){var s=t/8,s2=s*s,s3=s2*s;
    var X=0.5*((2*p1[0])+(-p0[0]+p2[0])*s+(2*p0[0]-5*p1[0]+4*p2[0]-p3[0])*s2+(-p0[0]+3*p1[0]-3*p2[0]+p3[0])*s3);
    var Y=0.5*((2*p1[1])+(-p0[1]+p2[1])*s+(2*p0[1]-5*p1[1]+4*p2[1]-p3[1])*s2+(-p0[1]+3*p1[1]-3*p2[1]+p3[1])*s3);
    ctx.lineTo(X,Y);}
}
ctx.closePath(); ctx.fillStyle='#fff'; ctx.fill();
ctx.globalCompositeOperation='source-in'; ctx.drawImage(off,0,0);
// inset (xy space)
var c2=document.getElementById('ins'); var ctx2=c2.getContext('2d');
var W2=c2.width,H2=c2.height,OX2=1346,OY2=374;
var img2=ctx2.createImageData(W2,H2); var d2=img2.data;
for(var py=0;py<H2;py++){
  for(var px=0;px<W2;px++){
    var r=0,g=0,b=0;
    for(var k=0;k<4;k++){
      var y=0.5053-((py+SS[k][1]+OY2)-440.9)/2684;
      var x=0.4193+((px+SS[k][0]+OX2)-1443.9)/3980;
      rgbFromXY(x,y,tmp,0); r+=tmp[0]; g+=tmp[1]; b+=tmp[2];
    }
    var i=(py*W2+px)*4; d2[i]=r/4; d2[i+1]=g/4; d2[i+2]=b/4; d2[i+3]=255;
  }
}
ctx2.putImageData(img2,0,0);
})();

</script>
</body></html>
